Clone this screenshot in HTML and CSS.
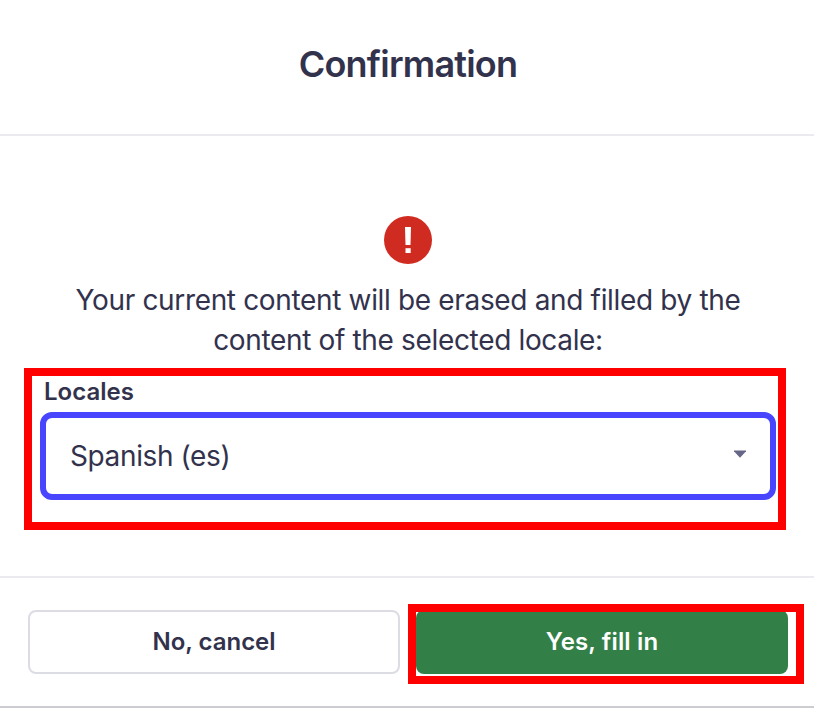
FILE: index.html
```html
<!DOCTYPE html>
<html lang="en">
<head>
<meta charset="utf-8">
<title>Confirmation</title>
<link rel="stylesheet" href="styles.css">
</head>
<body>
<main class="dialog">
  <header class="header"><h1>Confirmation</h1></header>
  <section class="body">
    <svg class="alert" viewBox="0 0 48 48" aria-hidden="true"><circle cx="24" cy="24" r="24" fill="#d02b20"/><path d="M21 11h6l-.5 18h-5z" fill="#fff"/><rect x="21.5" y="32.2" width="5.2" height="4.8" fill="#fff"/></svg>
    <p class="message">Your current content will be erased and filled by the content of the selected locale:</p>
    <div class="field">
      <div class="label">Locales</div>
      <div class="select"><span>Spanish (es)</span><svg class="caret" viewBox="0 0 12 8" aria-hidden="true"><path d="M0 .4h12v.8L6 7.8 0 1.2z" fill="#666687"/></svg></div>
    </div>
  </section>
  <footer class="footer">
    <button class="button cancel">No, cancel</button>
    <div class="highlight"><button class="button confirm">Yes, fill in</button></div>
  </footer>
</main>
</body>
</html>
```

FILE: styles.css
```css
* { box-sizing: border-box; }
body { margin: 0; background: #fff; color: #32324d; font-family: Inter, sans-serif; }
.dialog { height: 708px; display: flex; flex-direction: column; border-bottom: 2px solid #cdcdd1; }
.header { height: 136px; padding: 40px 0 0 2px; border-bottom: 2px solid #eaeaef; text-align: center; }
h1 { margin: 0; font-size: 36px; line-height: 48px; font-weight: 600; letter-spacing: -0.78px; }
.body { height: 440px; padding: 80px 28px 0 24px; display: flex; flex-direction: column; align-items: center; }
.alert { width: 48px; height: 48px; margin-left: 6px; }
.message { width: 700px; margin: 16px 0 8px 6px; font-size: 28px; line-height: 40px; letter-spacing: -0.34px; text-align: center; }
.field { width: 762px; height: 162px; border: 8px solid #f00; padding: 0 2px 0 8px; }
.label { padding-left: 4px; height: 36px; font-size: 24px; line-height: 32px; font-weight: 600; }
.select { height: 88px; border: 6px solid #4945ff; border-radius: 12px; padding: 0 24px; display: flex; align-items: center; justify-content: space-between; font-size: 28px; letter-spacing: -0.38px; }
.caret { width: 12px; height: 8px; margin-bottom: 4px; }
.footer { flex: 1; border-top: 2px solid #eaeaef; padding: 26px 10px 0 28px; display: flex; gap: 8px; }
.button { font: 600 24px/32px Inter, sans-serif; height: 64px; width: 372px; border-radius: 8px; padding: 0; }
.cancel { margin-top: 6px; color: #32324d; background: #fff; border: 2px solid #dcdce4; }
.confirm { display: block; margin-top: -2px; color: #fff; background: #328048; border: 0; letter-spacing: 0.15px; }
.highlight { width: 396px; height: 80px; border: 8px solid #f00; overflow: hidden; }
```
